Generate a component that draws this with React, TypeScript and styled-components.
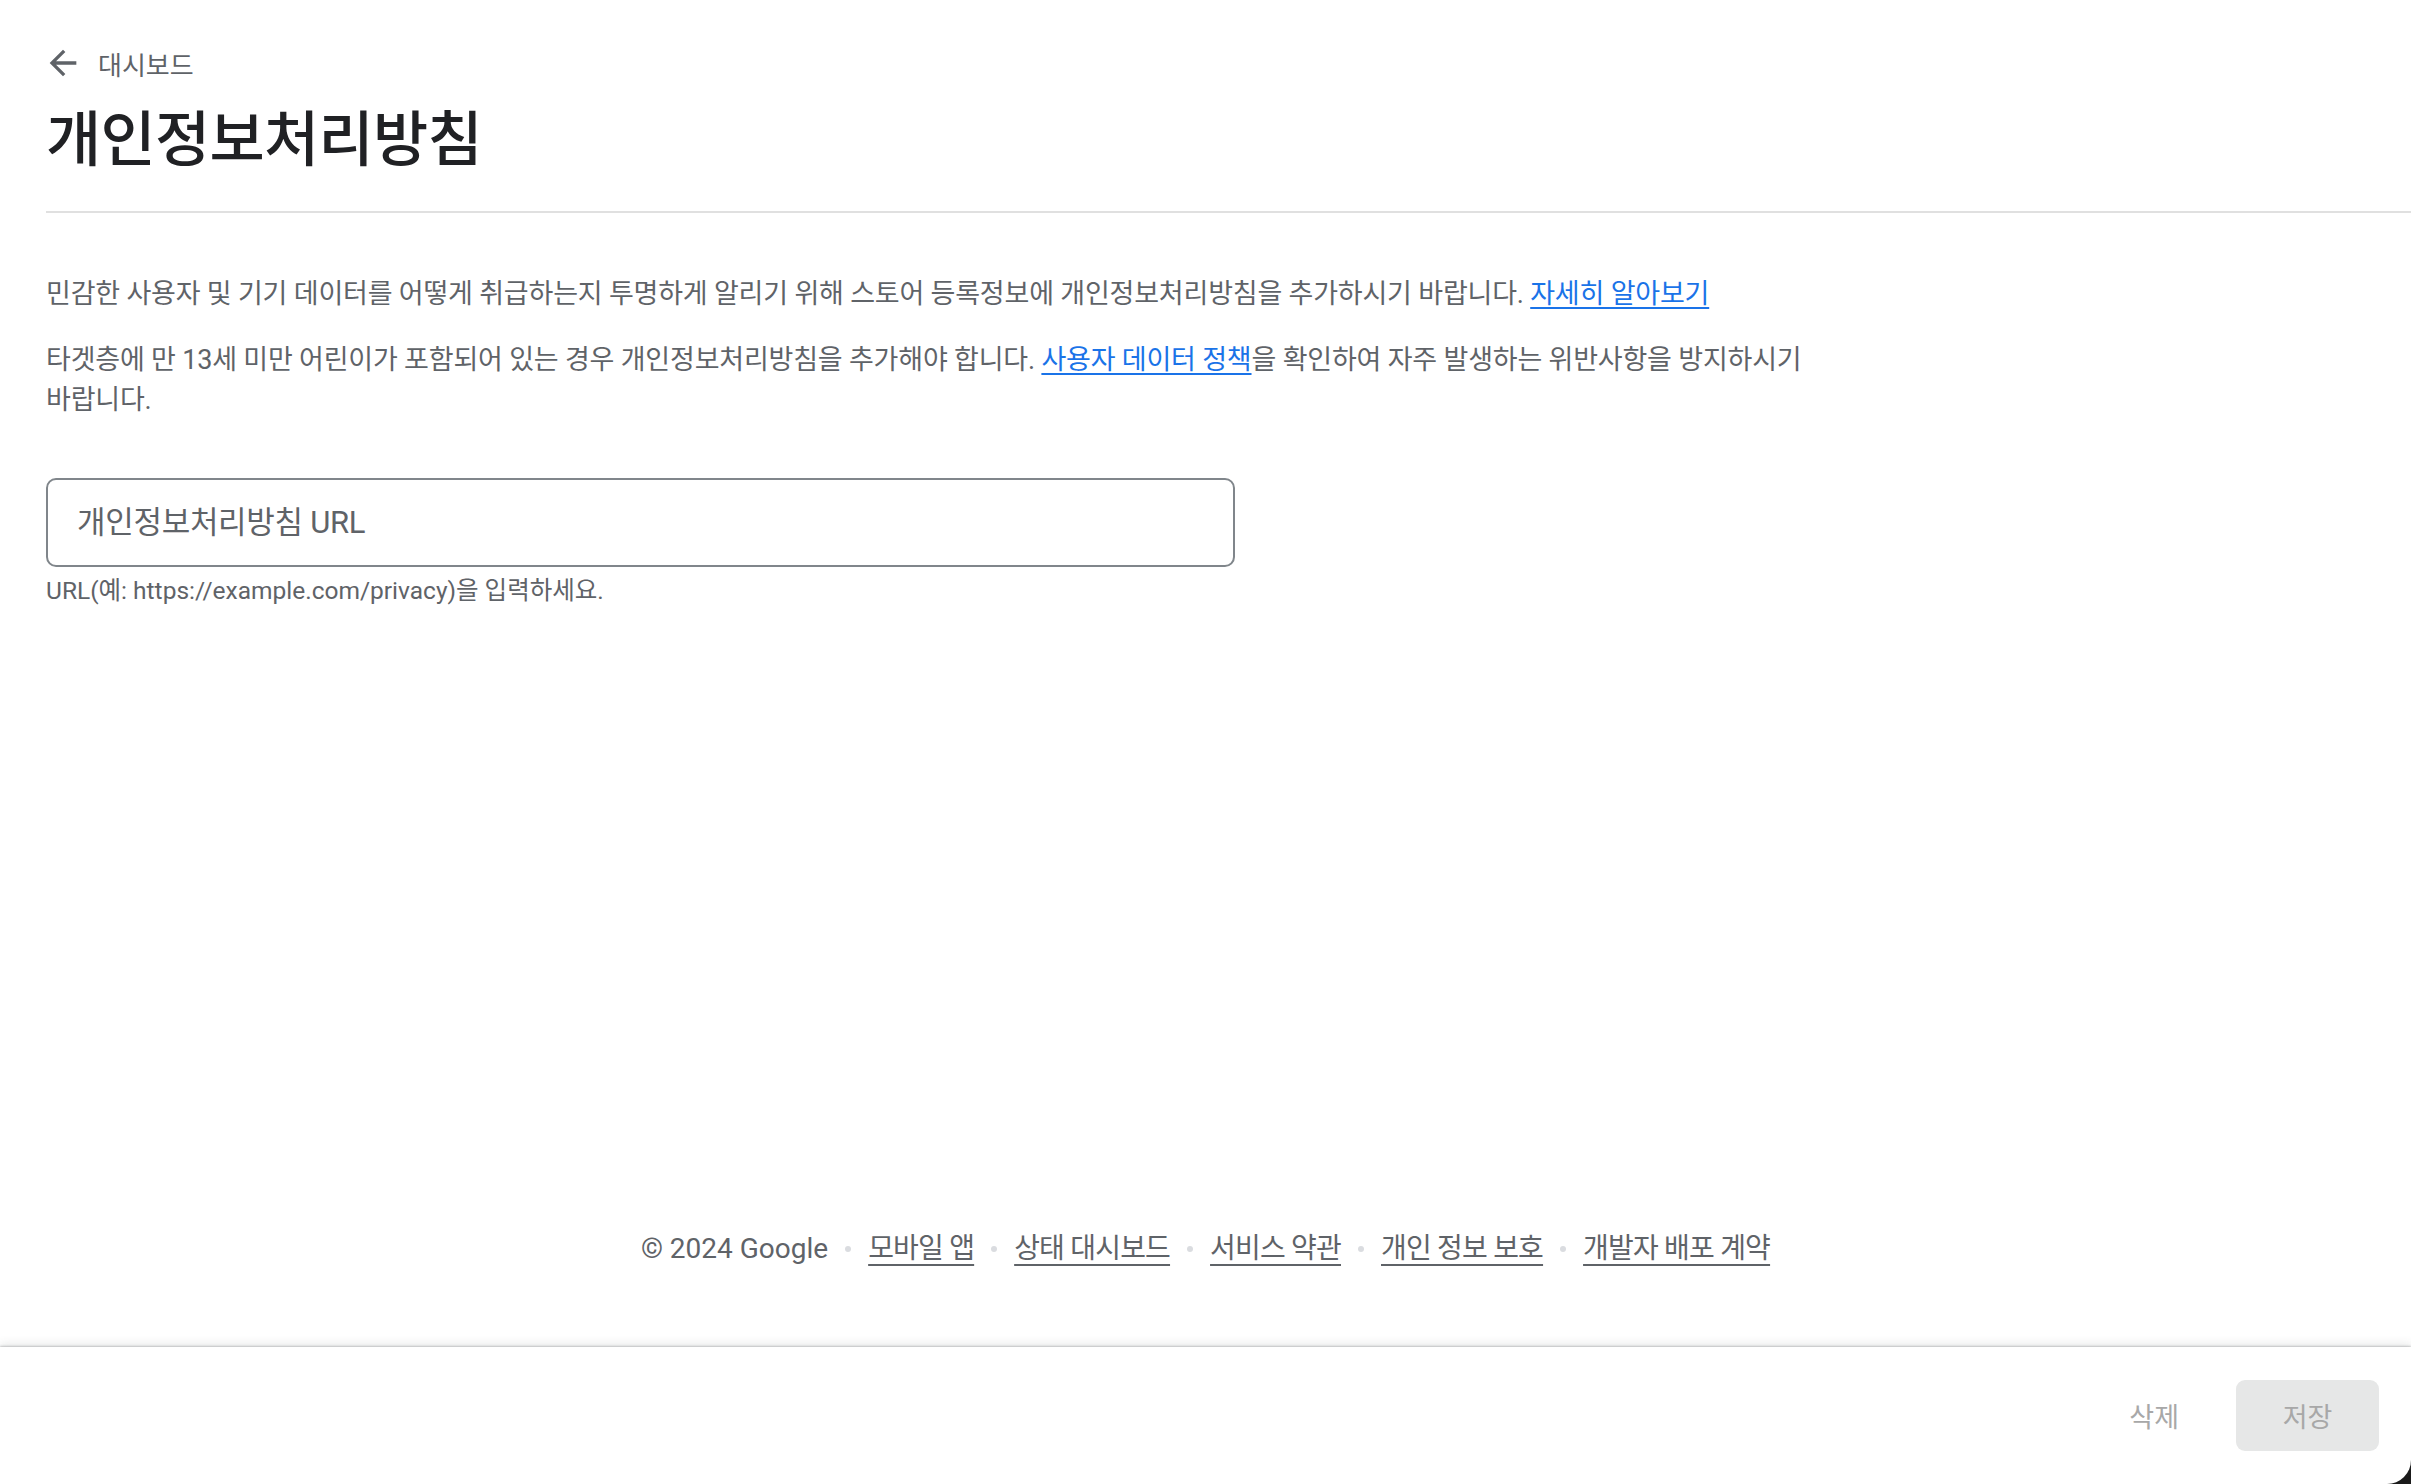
import React from "react";
import styled, { createGlobalStyle } from "styled-components";

const GlobalStyle = createGlobalStyle`
  html, body {
    margin: 0;
    padding: 0;
    background: #ffffff;
  }
  body {
    font-family: Roboto, "Noto Sans CJK KR", "Noto Sans", sans-serif;
    color: #202124;
    word-break: keep-all;
  }
  * { box-sizing: border-box; }
`;

const Page = styled.div`
  min-height: 100vh;
  display: flex;
  flex-direction: column;
  background: #ffffff;
`;

const Main = styled.main`
  flex: 1;
  padding: 43px 0 0 46px;
`;

const Breadcrumb = styled.a`
  display: inline-flex;
  align-items: center;
  gap: 15px;
  height: 40px;
  margin-left: -3px;
  color: #5f6368;
  font-size: 26px;
  text-decoration: none;
  cursor: pointer;
`;

const BackIcon = styled.svg`
  width: 40px;
  height: 40px;
  fill: #5f6368;
  flex-shrink: 0;
`;

const Title = styled.h1`
  margin: 16px 0 0;
  font-size: 60px;
  line-height: 76px;
  font-weight: 500;
  letter-spacing: -0.7px;
  color: #202124;
`;

const Divider = styled.hr`
  margin: 32px 0 0;
  border: 0;
  height: 2px;
  background: #e0e0e0;
`;

const Intro = styled.div`
  margin-top: 61px;
  max-width: 1800px;
  display: flex;
  flex-direction: column;
  gap: 26px;
`;

const Para = styled.p`
  margin: 0;
  font-size: 27px;
  line-height: 40px;
  letter-spacing: -0.2px;
  color: #5f6368;
  word-break: keep-all;
`;

const InlineLink = styled.a`
  color: #1a73e8;
  text-decoration: underline;
  text-underline-offset: 4px;
  text-decoration-thickness: 2px;
  cursor: pointer;
`;

const Field = styled.div`
  margin-top: 58px;
  width: 1189px;
`;

const UrlInput = styled.input`
  display: block;
  width: 100%;
  height: 89px;
  border: 2px solid #80868b;
  border-radius: 10px;
  padding: 0 29px;
  font-family: Roboto, "Noto Sans CJK KR", sans-serif;
  font-size: 31px;
  letter-spacing: -0.3px;
  color: #202124;
  background: #fff;
  outline: none;

  &::placeholder {
    color: #5f6368;
  }
`;

const Helper = styled.div`
  margin-top: 8px;
  font-size: 24.5px;
  line-height: 32px;
  color: #5f6368;
`;

const Footer = styled.footer`
  display: flex;
  justify-content: center;
  align-items: center;
  padding-bottom: 78px;
  font-size: 28px;
  line-height: 40px;
  color: #5f6368;
`;

const Copyright = styled.span`
  white-space: nowrap;
`;

const FooterLink = styled.a`
  font-size: 28px;
  letter-spacing: -0.8px;
  color: #5f6368;
  text-decoration: underline;
  text-underline-offset: 6px;
  text-decoration-thickness: 2px;
  white-space: nowrap;
  cursor: pointer;
`;

const Dot = styled.span`
  width: 6px;
  height: 6px;
  border-radius: 50%;
  background: #dadce0;
  margin: 0 17px;
  flex-shrink: 0;
`;

const BarFrame = styled.div`
  flex-shrink: 0;
  background: #1b1b1b;
`;

const Bar = styled.div`
  height: 137px;
  background: #ffffff;
  border-bottom-right-radius: 24px;
  display: flex;
  justify-content: flex-end;
  align-items: center;
  gap: 33px;
  padding-right: 32px;
  box-shadow: 0 -1px 2px rgba(60, 64, 67, 0.25), 0 -3px 10px rgba(60, 64, 67, 0.12);
  position: relative;
`;

const TextButton = styled.button`
  height: 71px;
  padding: 0 24px;
  border: 0;
  background: transparent;
  font-family: Roboto, "Noto Sans CJK KR", sans-serif;
  font-size: 27px;
  color: #a8a8a8;
`;

const SaveButton = styled.button`
  width: 143px;
  height: 71px;
  border: 0;
  border-radius: 9px;
  background: #e6e7e7;
  font-family: Roboto, "Noto Sans CJK KR", sans-serif;
  font-size: 27px;
  color: #a8a8a8;
`;

const footerLinks = ["모바일 앱", "상태 대시보드", "서비스 약관", "개인 정보 보호", "개발자 배포 계약"];

export default function App() {
  return (
    <>
      <GlobalStyle />
      <Page>
        <Main>
          <Breadcrumb>
            <BackIcon viewBox="0 0 24 24" aria-hidden="true">
              <path d="M20 11H7.83l5.59-5.59L12 4l-8 8 8 8 1.41-1.41L7.83 13H20v-2z" />
            </BackIcon>
            대시보드
          </Breadcrumb>
          <Title>개인정보처리방침</Title>
          <Divider />
          <Intro>
            <Para>
              민감한 사용자 및 기기 데이터를 어떻게 취급하는지 투명하게 알리기 위해 스토어 등록정보에
              개인정보처리방침을 추가하시기 바랍니다. <InlineLink>자세히 알아보기</InlineLink>
            </Para>
            <Para>
              <span>타겟층에 만 13세 미만 어린이가 포함되어 있는 경우 개인정보처리방침을 추가해야 합니다. </span>
              <InlineLink>사용자 데이터 정책</InlineLink>
              <span>을 확인하여 자주 발생하는 위반사항을 방지하시기</span>
              <br />
              <span>바랍니다.</span>
            </Para>
          </Intro>
          <Field>
            <UrlInput type="text" placeholder="개인정보처리방침 URL" />
            <Helper>URL(예: https://example.com/privacy)을 입력하세요.</Helper>
          </Field>
        </Main>
        <Footer>
          <Copyright>© 2024 Google</Copyright>
          {footerLinks.map((label) => (
            <React.Fragment key={label}>
              <Dot />
              <FooterLink>{label}</FooterLink>
            </React.Fragment>
          ))}
        </Footer>
        <BarFrame>
          <Bar>
            <TextButton>삭제</TextButton>
            <SaveButton>저장</SaveButton>
          </Bar>
        </BarFrame>
      </Page>
    </>
  );
}
